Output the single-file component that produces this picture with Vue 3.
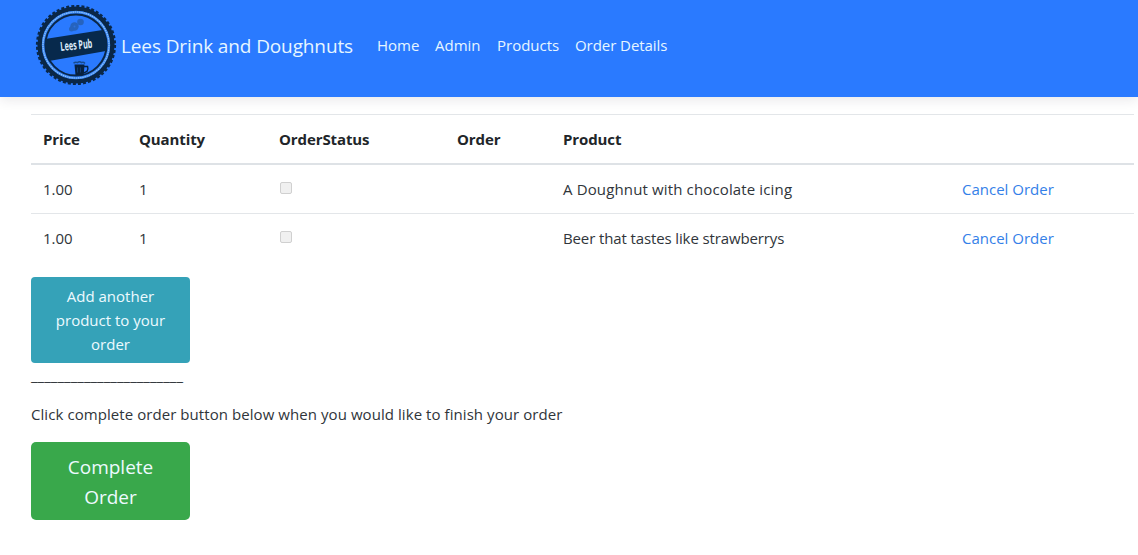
<script setup>
const links = [
  { label: 'Home', cls: 'home' },
  { label: 'Admin', cls: 'admin' },
  { label: 'Products', cls: 'products' },
  { label: 'Order Details', cls: 'details' },
]
const orders = [
  { price: '1.00', quantity: 1, product: 'A Doughnut with chocolate icing', cls: 'doughnut' },
  { price: '1.00', quantity: 1, product: 'Beer that tastes like strawberrys', cls: 'beer' },
]
</script>

<template>
  <div class="page">
    <nav class="navbar">
      <svg class="logo" viewBox="0 0 82 82" width="82" height="82">
        <circle cx="41" cy="41" r="36.3" fill="none" stroke="#0a2747" stroke-width="4.6" />
        <circle cx="41" cy="41" r="38.8" fill="none" stroke="#0a2747" stroke-width="2.6" stroke-dasharray="3 2.08" />
        <circle cx="41" cy="41" r="33" fill="none" stroke="#3b86f0" stroke-width="2.4" />
        <circle cx="41" cy="41" r="33" fill="none" stroke="#8fc4fb" stroke-width="1.2" stroke-dasharray="1.4 .8" />
        <circle cx="41" cy="41" r="30.6" fill="none" stroke="#0a2747" stroke-width="2" />
        <path d="M10 35 67.500 26 Q71 32 72 40 L71 47 14 57 Q9 47 10 35Z" fill="#07294c" />
        <g fill="#2663bd">
          <circle cx="45.500" cy="18" r="3.300" />
          <circle cx="39.500" cy="22.500" r="4.200" />
          <circle cx="36.500" cy="25" r="2.500" />
        </g>
        <circle cx="39.500" cy="22.500" r="1" fill="#2e72da" />
        <text x="41.300" y="45.400" transform="rotate(-6 41.300 41)" text-anchor="middle" textLength="32" lengthAdjust="spacingAndGlyphs" class="logo-text">Lees Pub</text>
        <path d="M39.500 60.500h10l-.7 10.500h-8.300z" fill="#07213f" />
        <path d="M49 62.500h3.600q1 2.800-.7 5l-3 1.300" fill="none" stroke="#07213f" stroke-width="1.400" />
        <path d="M38.500 59.300q2-1.800 4-.7 2-1.500 4 0 2-.8 3.500.9" fill="none" stroke="#174b8e" stroke-width="1.500" />
        <path d="M42.500 63.500v5M45.500 63.500v5" stroke="#1a4c91" stroke-width=".6" />
      </svg>
      <a class="brand">Lees Drink and Doughnuts</a>
      <div class="links">
        <a v-for="link in links" :key="link.label" :class="link.cls">{{ link.label }}</a>
      </div>
    </nav>

    <main>
      <table>
        <colgroup>
          <col class="c1" /><col class="c2" /><col class="c3" /><col class="c4" /><col class="c5" /><col />
        </colgroup>
        <thead>
          <tr>
            <th>Price</th>
            <th>Quantity</th>
            <th>OrderStatus</th>
            <th>Order</th>
            <th>Product</th>
            <th></th>
          </tr>
        </thead>
        <tbody>
          <tr v-for="order in orders" :key="order.product">
            <td>{{ order.price }}</td>
            <td>{{ order.quantity }}</td>
            <td><span class="check"></span></td>
            <td></td>
            <td :class="order.cls">{{ order.product }}</td>
            <td><a class="cancel">Cancel Order</a></td>
          </tr>
        </tbody>
      </table>

      <button class="btn add">Add another product to your order</button>
      <div class="rule">_______________________</div>
      <p>Click complete order button below when you would like to finish your order</p>
      <button class="btn complete">Complete Order</button>
    </main>
  </div>
</template>

<style>
body {
  margin: 0;
  background: #fff;
}
</style>

<style scoped>
.page {
  height: 555px;
  overflow: hidden;
  font: 15px/24px "Open Sans", "Noto Sans", sans-serif;
  color: #30353a;
}
.navbar {
  box-sizing: border-box;
  height: 97px;
  padding: 0 0 7px 35px;
  display: flex;
  align-items: center;
  background: #2a7aff;
  box-shadow: 0 2px 12px rgba(40, 35, 60, 0.12);
  color: #e6f6ff;
  white-space: nowrap;
}
.logo {
  flex: none;
}
.logo-text {
  font: bold 12.5px "Open Sans", sans-serif;
  fill: #dcebfa;
}
.brand {
  width: 256px;
  margin-left: 4px;
  padding-top: 2px;
  font-size: 19px;
  letter-spacing: -0.12px;
}
.links {
  display: flex;
}
.home { width: 58px; }
.admin { width: 62px; }
.products { width: 78px; }
.details { letter-spacing: -0.06px; }
main {
  padding: 17px 4px 0 31px;
}
table {
  width: 100%;
  table-layout: fixed;
  border-collapse: separate;
  border-spacing: 0;
}
.c1 { width: 96px; }
.c2 { width: 140px; }
.c3 { width: 178px; }
.c4 { width: 106px; }
.c5 { width: 399px; }
th,
td {
  height: 24px;
  padding: 12px;
  text-align: left;
  vertical-align: top;
  border-top: 1px solid #e3e6e9;
}
th {
  color: #212529;
  letter-spacing: -0.1px;
  border-bottom: 1px solid #dee2e6;
}
tbody tr:first-child td {
  border-top-color: #dee2e6;
}
.doughnut { letter-spacing: 0.14px; }
.beer { letter-spacing: -0.12px; }
.check {
  display: block;
  box-sizing: border-box;
  width: 12px;
  height: 12px;
  margin: 5px 0 0 1px;
  border: 1px solid #d0d0d0;
  border-radius: 2px;
  background: #f0f0f0;
}
.cancel {
  color: #3480e8;
}
.btn {
  display: block;
  box-sizing: border-box;
  width: 159px;
  border: 0;
  font-family: inherit;
  color: #edfaff;
  text-align: center;
}
.add {
  height: 86px;
  margin-top: 15px;
  padding: 7px 13px;
  border-radius: 4px;
  background: #35a2b8;
  font-size: 15px;
  line-height: 24px;
}
.rule {
  height: 24px;
  letter-spacing: 0.04px;
  white-space: nowrap;
}
p {
  margin: 15px 0 16px;
  letter-spacing: 0.067px;
}
.complete {
  height: 78px;
  padding: 10px 17px 8px;
  border-radius: 5px;
  background: #39a84b;
  font-size: 19px;
  line-height: 30px;
}
</style>
